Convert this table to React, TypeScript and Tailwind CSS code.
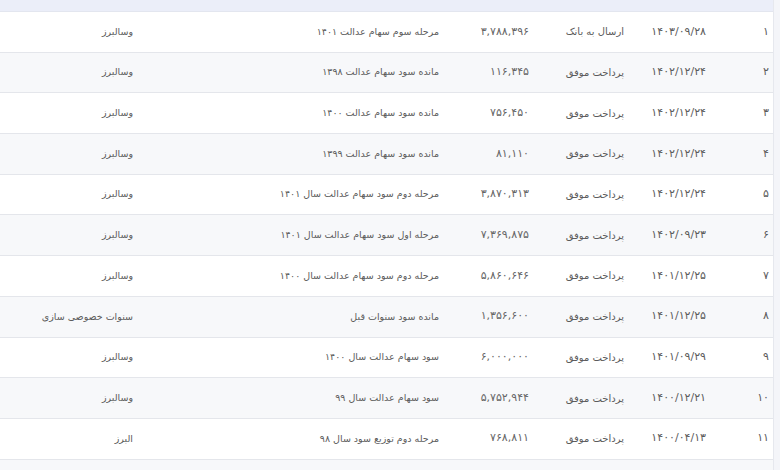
type Row = {
  n: string;
  date: string;
  status: string;
  amount: string;
  desc: string;
  bank: string;
};

const rows: Row[] = [
  { n: "۱", date: "۱۴۰۳/۰۹/۲۸", status: "ارسال به بانک", amount: "۳,۷۸۸,۳۹۶", desc: "مرحله سوم سهام عدالت ۱۴۰۱", bank: "وسالبرز" },
  { n: "۲", date: "۱۴۰۲/۱۲/۲۴", status: "پرداخت موفق", amount: "۱۱۶,۳۴۵", desc: "مانده سود سهام عدالت ۱۳۹۸", bank: "وسالبرز" },
  { n: "۳", date: "۱۴۰۲/۱۲/۲۴", status: "پرداخت موفق", amount: "۷۵۶,۴۵۰", desc: "مانده سود سهام عدالت ۱۴۰۰", bank: "وسالبرز" },
  { n: "۴", date: "۱۴۰۲/۱۲/۲۴", status: "پرداخت موفق", amount: "۸۱,۱۱۰", desc: "مانده سود سهام عدالت ۱۳۹۹", bank: "وسالبرز" },
  { n: "۵", date: "۱۴۰۲/۱۲/۲۴", status: "پرداخت موفق", amount: "۳,۸۷۰,۳۱۳", desc: "مرحله دوم سود سهام عدالت سال ۱۴۰۱", bank: "وسالبرز" },
  { n: "۶", date: "۱۴۰۲/۰۹/۲۳", status: "پرداخت موفق", amount: "۷,۳۶۹,۸۷۵", desc: "مرحله اول سود سهام عدالت سال ۱۴۰۱", bank: "وسالبرز" },
  { n: "۷", date: "۱۴۰۱/۱۲/۲۵", status: "پرداخت موفق", amount: "۵,۸۶۰,۶۴۶", desc: "مرحله دوم سود سهام عدالت سال ۱۴۰۰", bank: "وسالبرز" },
  { n: "۸", date: "۱۴۰۱/۱۲/۲۵", status: "پرداخت موفق", amount: "۱,۳۵۶,۶۰۰", desc: "مانده سود سنوات قبل", bank: "سنوات خصوصی سازی" },
  { n: "۹", date: "۱۴۰۱/۰۹/۲۹", status: "پرداخت موفق", amount: "۶,۰۰۰,۰۰۰", desc: "سود سهام عدالت سال ۱۴۰۰", bank: "وسالبرز" },
  { n: "۱۰", date: "۱۴۰۰/۱۲/۲۱", status: "پرداخت موفق", amount: "۵,۷۵۲,۹۴۴", desc: "سود سهام عدالت سال ۹۹", bank: "وسالبرز" },
  { n: "۱۱", date: "۱۴۰۰/۰۴/۱۳", status: "پرداخت موفق", amount: "۷۶۸,۸۱۱", desc: "مرحله دوم توزیع سود سال ۹۸", bank: "البرز" },
  { n: "", date: "", status: "", amount: "", desc: "", bank: "" },
];

export default function App() {
  return (
    <div dir="rtl" className="h-[470px] w-[780px] overflow-hidden bg-[#f4f5f9] font-['DejaVu_Sans',sans-serif] text-[11px] text-[#5b5b5b]">
      <div className="ml-0 mr-auto w-[774px] border-r border-[#e6e8ee] bg-white">
        <div className="h-[12px] border-b border-[#e3e6ef] bg-[#ebeef9]" />
        {rows.map((row, i) => (
          <div
            key={i}
            className={`grid h-[40.7px] grid-cols-[60px_82px_95px_90px_306px_1fr] items-center border-b border-[#e4e6eb] ${
              i % 2 === 1 ? "bg-[#f7f8fa]" : "bg-white"
            }`}
          >
            <div className="pr-[4px]">{row.n}</div>
            <div className="pr-[7px]">{row.date}</div>
            <div className="pr-[7px] text-[10px]">{row.status}</div>
            <div className="pr-[7px] text-[#666]">{row.amount}</div>
            <div className="pr-[7px] text-[9.5px]">{row.desc}</div>
            <div className="pr-[7px] text-[9.5px]">{row.bank}</div>
          </div>
        ))}
      </div>
    </div>
  );
}
